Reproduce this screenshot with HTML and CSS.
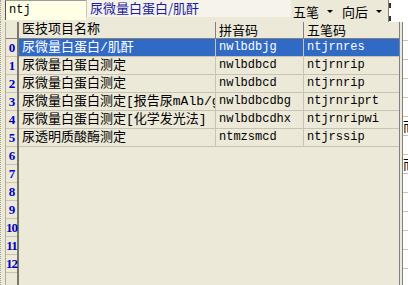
FILE: index.html
```html
<!DOCTYPE html>
<html lang="zh-CN">
<head>
    <meta charset="UTF-8">
    <meta name="viewport" content="width=device-width, initial-scale=1.0">
    <link rel="stylesheet" href="styles.css">
    <title>医技项目</title>
</head>
<body>
    <div class="toolbar">
        <div class="grip"></div>
        <div class="search">ntj</div>
        <div class="current">尿微量白蛋白/肌酐</div>
        <div class="dropdown">五笔<span class="arrow"></span></div>
        <div class="dropdown">向后<span class="arrow"></span></div>
        <div class="side side-top">
            <span class="mark"></span><span class="mark"></span>
        </div>
    </div>
    <div class="main">
        <div class="grip"></div>
        <div class="rownums">
            <div class="num head"></div>
            <div class="num">0</div>
            <div class="num">1</div>
            <div class="num">2</div>
            <div class="num">3</div>
            <div class="num">4</div>
            <div class="num">5</div>
            <div class="num">6</div>
            <div class="num">7</div>
            <div class="num">8</div>
            <div class="num">9</div>
            <div class="num">10</div>
            <div class="num">11</div>
            <div class="num">12</div>
        </div>
        <div class="grid">
            <div class="row header">
                <div class="cell name">医技项目名称</div>
                <div class="cell code">拼音码</div>
                <div class="cell code">五笔码</div>
            </div>
            <div class="row selected">
                <div class="cell name">尿微量白蛋白/肌酐</div>
                <div class="cell code">nwlbdbjg</div>
                <div class="cell code">ntjrnres</div>
            </div>
            <div class="row">
                <div class="cell name">尿微量白蛋白测定</div>
                <div class="cell code">nwlbdbcd</div>
                <div class="cell code">ntjrnrip</div>
            </div>
            <div class="row">
                <div class="cell name">尿微量白蛋白测定</div>
                <div class="cell code">nwlbdbcd</div>
                <div class="cell code">ntjrnrip</div>
            </div>
            <div class="row">
                <div class="cell name">尿微量白蛋白测定[报告尿mAlb/g</div>
                <div class="cell code">nwlbdbcdbg</div>
                <div class="cell code">ntjrnriprt</div>
            </div>
            <div class="row">
                <div class="cell name">尿微量白蛋白测定[化学发光法]</div>
                <div class="cell code">nwlbdbcdhx</div>
                <div class="cell code">ntjrnripwi</div>
            </div>
            <div class="row">
                <div class="cell name">尿透明质酸酶测定</div>
                <div class="cell code">ntmzsmcd</div>
                <div class="cell code">ntjrssip</div>
            </div>
        </div>
        <div class="side">
            <div class="side-row"></div>
            <div class="side-row"></div>
            <div class="side-row"></div>
            <div class="side-row"></div>
            <div class="side-row"></div>
            <div class="side-row glyph">而</div>
            <div class="side-row"></div>
            <div class="side-row glyph">而</div>
            <div class="side-row"></div>
            <div class="side-row"></div>
            <div class="side-row"></div>
            <div class="side-row"></div>
            <div class="side-row"></div>
            <div class="side-row"></div>
        </div>
    </div>
</body>
</html>
```

FILE: styles.css
```css
body {
    margin: 0;
    width: 408px;
    height: 285px;
    overflow: hidden;
    background-color: #ece9d8;
    color: #000;
    font-family: "Noto Sans CJK SC", sans-serif;
    font-size: 13px;
}

.toolbar {
    display: flex;
    height: 22px;
}

.grip {
    width: 4px;
    border-left: 1px dotted #a8a490;
    flex-shrink: 0;
}

.search {
    width: 77px;
    height: 19px;
    padding-left: 3px;
    background-color: #ffffe6;
    border-left: 1px solid #555;
    border-top: 1px solid #9a9a9a;
    font-family: "Liberation Mono", monospace;
    font-size: 12px;
    line-height: 19px;
}

.current {
    width: 201px;
    height: 17px;
    padding-left: 3px;
    background-color: #f6f4ea;
    border-left: 1px solid #c8c4b4;
    color: #1c1ca0;
    line-height: 16px;
}

.dropdown {
    display: flex;
    align-items: center;
    height: 22px;
    margin-left: 2px;
    margin-right: 4px;
}

.dropdown + .dropdown {
    margin-left: 5px;
}

.arrow {
    width: 0;
    height: 0;
    margin-left: 8px;
    border-left: 3px solid transparent;
    border-right: 3px solid transparent;
    border-top: 3px solid #000;
}

.main {
    display: flex;
    height: 263px;
}

.rownums {
    width: 11px;
    border-left: 1px solid #b0ad9c;
    border-right: 2px solid #7a7868;
    flex-shrink: 0;
}

.num {
    height: 17px;
    border-bottom: 1px solid #c8c4b4;
    color: #0000c0;
    font-family: "Liberation Serif", serif;
    font-weight: bold;
    font-size: 13px;
    line-height: 18px;
    text-align: center;
    letter-spacing: -1px;
}

.num.head {
    height: 16px;
    border-bottom: 1px solid #808080;
}

.grid {
    width: 380px;
    border-right: 1px solid #808080;
    flex-shrink: 0;
}

.row {
    display: flex;
    height: 17px;
    border-bottom: 1px solid #c8c4b4;
}

.row.header {
    height: 16px;
    border-bottom: 1px solid #808080;
}

.cell {
    padding-left: 3px;
    white-space: nowrap;
    line-height: 17px;
    border-right: 1px solid #c8c4b4;
}

.header .cell {
    border-right: 1px solid #808080;
    line-height: 16px;
}

.cell.name {
    width: 193px;
    overflow: hidden;
    font-family: "Liberation Mono", "Noto Sans CJK SC", monospace;
}

.cell.code {
    width: 84px;
    font-family: "Liberation Mono", monospace;
    font-size: 12px;
}

.cell.code:last-child {
    width: 91px;
    border-right: 0;
}

.header .cell.code {
    font-family: "Noto Sans CJK SC", sans-serif;
    font-size: 13px;
}

.selected {
    background-color: #316ac5;
    color: #fff;
}

.side {
    flex: 1;
    margin-left: 2px;
    background-color: #fff;
    border-left: 1px solid #808080;
    overflow: hidden;
}

.side-top {
    display: flex;
    flex-direction: column;
    gap: 8px;
    padding-top: 3px;
}

.mark {
    display: block;
    width: 2px;
    height: 5px;
    background-color: #333;
}

.side-row {
    height: 18px;
    border-bottom: 1px solid #c8c4b4;
}

.side-row.glyph {
    font-size: 13px;
    line-height: 18px;
}
```
